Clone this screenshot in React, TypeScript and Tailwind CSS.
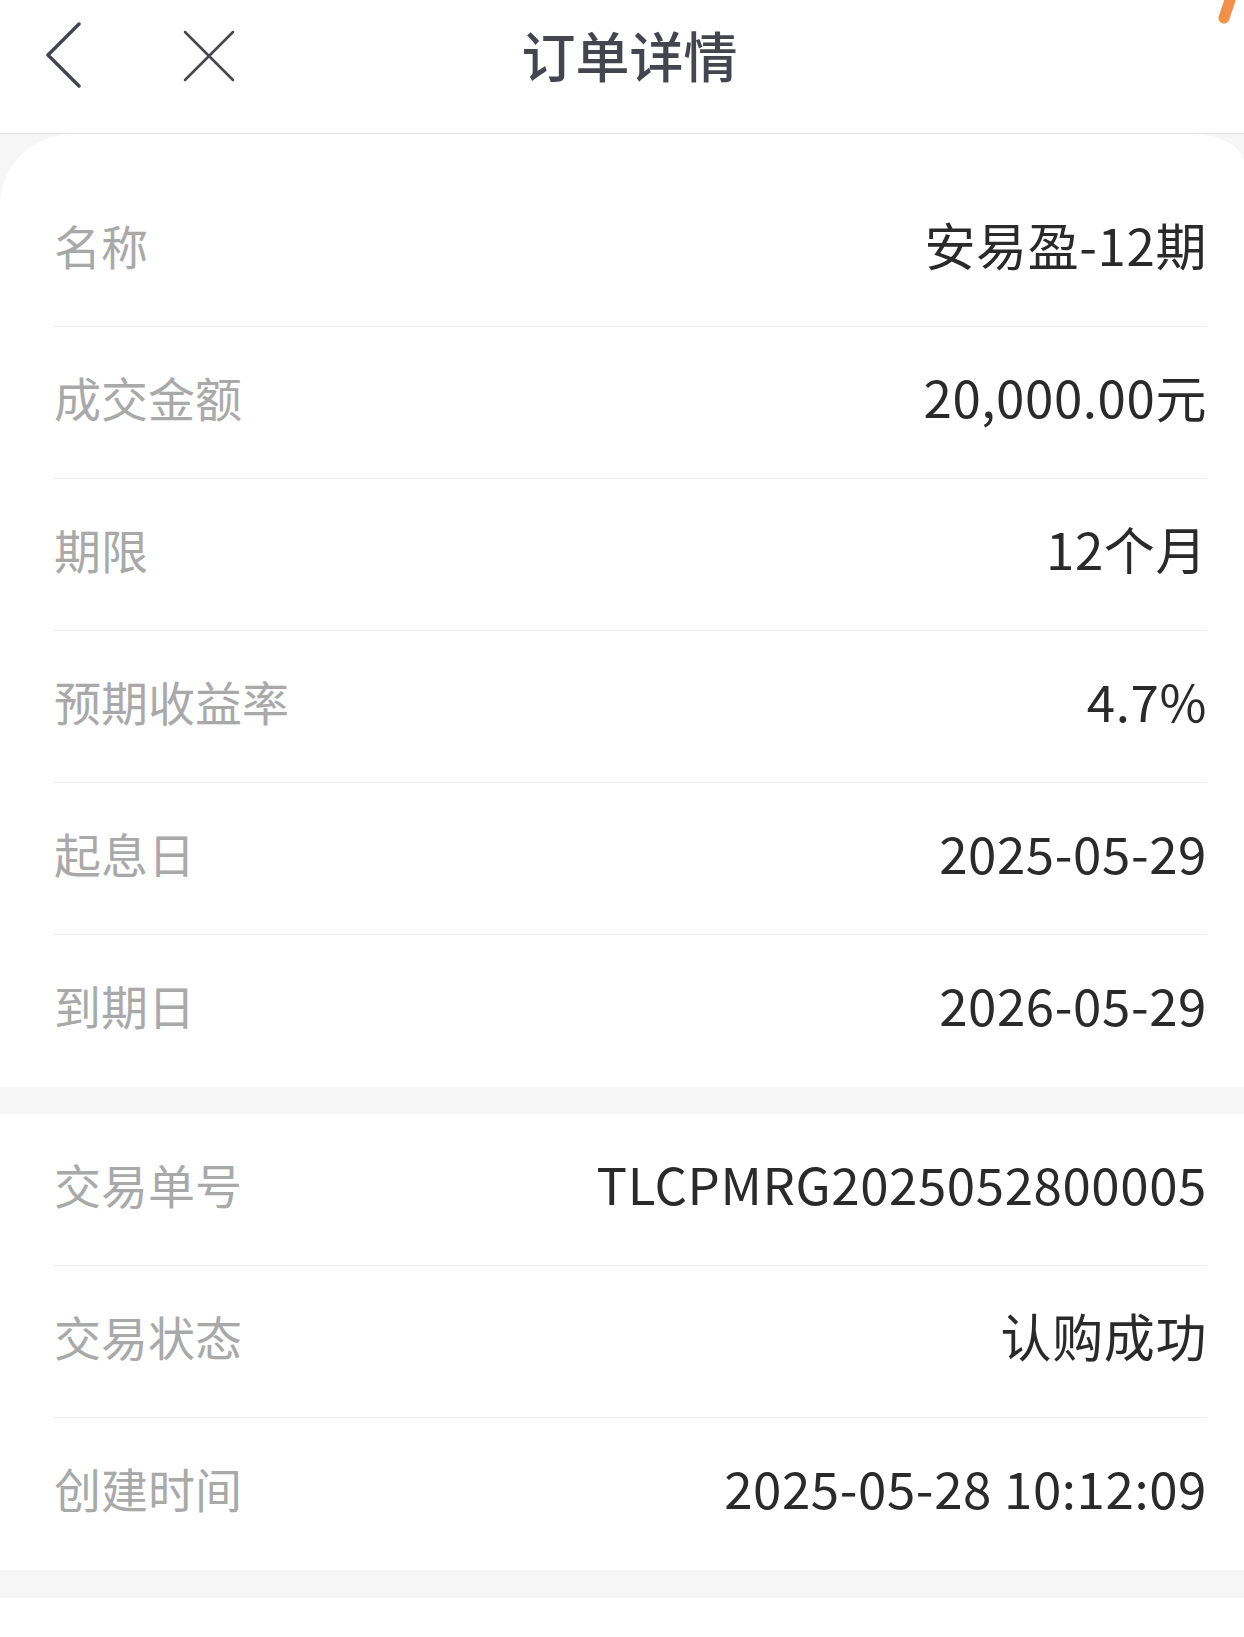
import React from "react";

const font = { fontFamily: '"Noto Sans CJK SC", "Noto Sans", sans-serif' };

type Row = { label: string; value: string };

const card1: Row[] = [
  { label: "名称", value: "安易盈-12期" },
  { label: "成交金额", value: "20,000.00元" },
  { label: "期限", value: "12个月" },
  { label: "预期收益率", value: "4.7%" },
  { label: "起息日", value: "2025-05-29" },
  { label: "到期日", value: "2026-05-29" },
];

const card2: Row[] = [
  { label: "交易单号", value: "TLCPMRG2025052800005" },
  { label: "交易状态", value: "认购成功" },
  { label: "创建时间", value: "2025-05-28 10:12:09" },
];

function Rows({ rows }: { rows: Row[] }) {
  return (
    <div className="pl-[54px] pr-[37px]">
      {rows.map((r, i) => (
        <div
          key={r.label}
          className={
            "flex h-[152px] items-center justify-between border-b pb-[13px] " +
            (i < rows.length - 1 ? "border-[#ebebeb]" : "border-transparent")
          }
        >
          <span className="text-[47px] leading-none text-[#a9a9a9]">{r.label}</span>
          <span className="text-[51px] leading-none text-[#2a2a2a] tracking-[0.6px]">{r.value}</span>
        </div>
      ))}
    </div>
  );
}

export default function App() {
  return (
    <div className="relative w-[1244px] min-h-[1637px] bg-white overflow-hidden" style={font}>
      <svg
        className="absolute right-0 top-0"
        width="40"
        height="30"
        viewBox="1204 0 40 30"
      >
        <line x1="1232" y1="-6" x2="1224" y2="18" stroke="#f0904a" strokeWidth="11" strokeLinecap="round" />
      </svg>
      <header className="flex h-[134px] items-start border-b border-[#e2e2e2]">
        <div className="flex w-[260px] items-start pl-[46px] pt-[22px]">
          <svg width="36" height="66" viewBox="0 0 36 66" fill="none">
            <polyline
              points="33,2 2,33 33,64"
              stroke="#45454f"
              strokeWidth="3.5"
              strokeLinecap="round"
              strokeLinejoin="round"
            />
          </svg>
          <svg className="ml-[101px] mt-[8px]" width="52" height="52" viewBox="0 0 52 52" fill="none">
            <path d="M2 2 L50 50 M50 2 L2 50" stroke="#45454f" strokeWidth="2.5" strokeLinecap="round" />
          </svg>
        </div>
        <h1 className="flex-1 pt-[28px] text-center text-[54px] font-medium leading-none text-[#45454f]">
          订单详情
        </h1>
        <div className="w-[245px]" />
      </header>
      <div className="bg-[#f6f6f6]">
        <div className="rounded-tl-[72px] rounded-tr-[51px_30px] bg-white pt-[41px]">
          <Rows rows={card1} />
        </div>
        <div className="h-[27px]" />
        <div className="bg-white">
          <Rows rows={card2} />
        </div>
        <div className="h-[28px]" />
        <div className="h-[60px] bg-white" />
      </div>
    </div>
  );
}
